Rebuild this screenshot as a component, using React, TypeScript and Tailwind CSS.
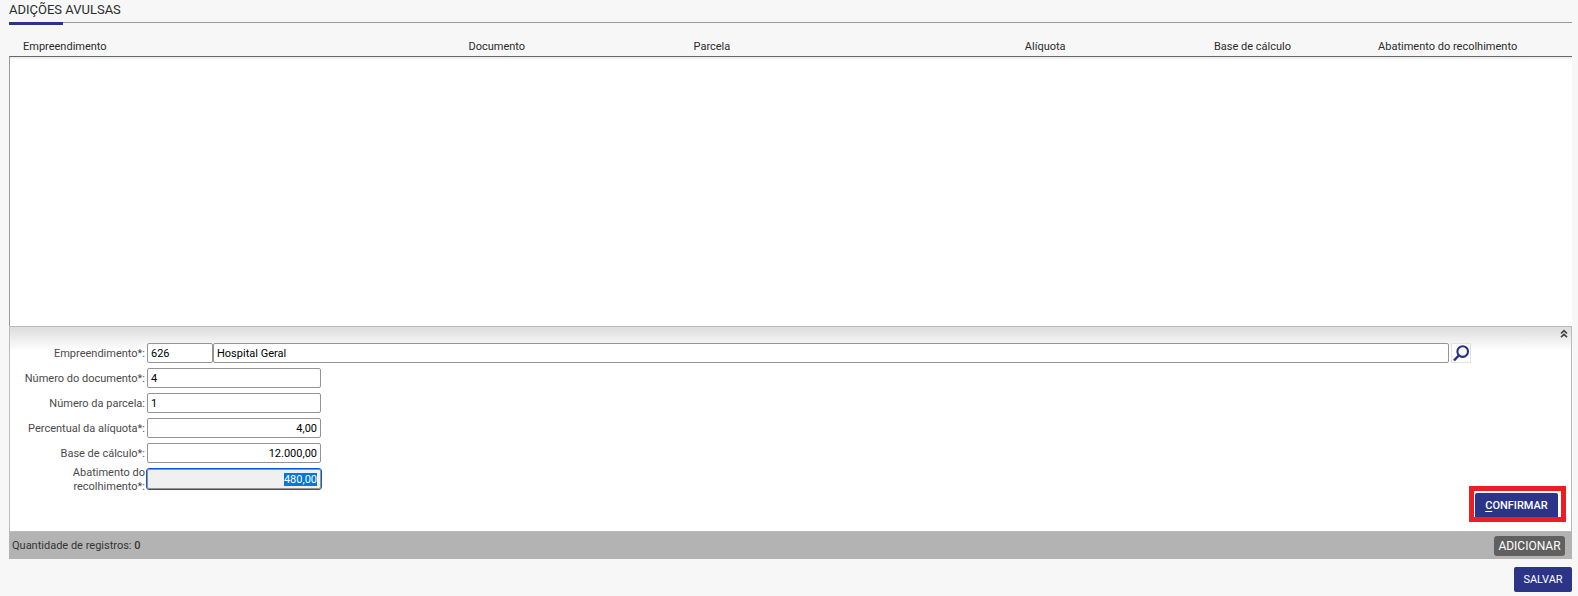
import { useEffect, useRef } from "react";
import type { ReactNode } from "react";

const field =
  "h-5 rounded-[2px] border border-[#949494] bg-white px-[3px] pt-[2px] text-[11px] text-black outline-none";

function Row({ id, label, required = true, children }: { id: string; label: string; required?: boolean; children: ReactNode }) {
  return (
    <div className="flex h-[25px] items-center">
      <label htmlFor={id} className="mr-[2px] w-[135px] shrink-0 pt-[2px] text-right leading-[14px] whitespace-nowrap text-[#4a4a4a]">
        {label}
        {required && "*"}:
      </label>
      {children}
    </div>
  );
}

export default function App() {
  const rebate = useRef<HTMLInputElement>(null);

  useEffect(() => {
    rebate.current?.focus();
    rebate.current?.select();
  }, []);

  return (
    <main className="min-h-screen bg-[#f7f7f7] pr-[6px] pl-[9px] font-[Roboto,sans-serif] text-[11px] text-[#2b2b2b]">
      <header className="h-[25px] pt-[2px]">
        <h1 className="h-5 text-[13px] leading-4 text-[#2b2b2b]">ADIÇÕES AVULSAS</h1>
        <div className="border-t border-[#999999]">
          <div className="-mt-px h-[3px] w-[54px] bg-[#2b3487]" />
        </div>
      </header>

      <table className="w-full table-fixed border-collapse">
        <colgroup>
          <col className="w-[28.5%]" />
          <col className="w-[14.4%]" />
          <col className="w-[21.2%]" />
          <col className="w-[12.1%]" />
          <col className="w-[10.5%]" />
          <col />
        </colgroup>
        <thead>
          <tr className="h-[31px] text-left align-bottom">
            <th className="pb-px pl-[14px] font-normal">Empreendimento</th>
            <th className="pb-px pl-[14px] font-normal">Documento</th>
            <th className="pb-px pl-[14px] font-normal">Parcela</th>
            <th className="pb-px pl-[14px] font-normal">Alíquota</th>
            <th className="pb-px pl-[14px] font-normal">Base de cálculo</th>
            <th className="pb-px pl-[14px] font-normal">Abatimento do recolhimento</th>
          </tr>
        </thead>
      </table>
      <div className="h-[270px] border-t border-l border-t-[#666666] border-l-[#999999] bg-white">
        <div className="h-[2px] bg-[#f1f1f1]" />
      </div>

      <form
        className="border-x border-t border-[#bbbbbb] bg-white bg-[linear-gradient(to_bottom,#dddddd,#ffffff_24px)]"
        onSubmit={(e) => e.preventDefault()}
      >
        <div className="flex h-[13px] justify-end pr-[3px]">
          <button type="button" aria-label="Recolher" className="flex h-[11px] w-2 items-end">
            <svg viewBox="0 0 8 9" className="h-[9px] w-2" fill="none" stroke="#3f3f3f" strokeWidth="1.7">
              <path d="M1 4.5 4 1.7 7 4.5M1 8.2 4 5.4 7 8.2" />
            </svg>
          </button>
        </div>

        <Row id="emp" label="Empreendimento">
          <input id="emp" defaultValue="626" className={`${field} w-[66px] shrink-0`} />
          <input aria-label="Nome do empreendimento" defaultValue="Hospital Geral" className={`${field} min-w-0 flex-1`} />
          <button
            type="button"
            aria-label="Pesquisar"
            className="mr-[100px] ml-[2px] flex h-5 w-5 shrink-0 items-center justify-center border border-[#e2e2e2] bg-[#fcfcfc]"
          >
            <svg viewBox="0 0 18 18" className="h-[18px] w-[18px]" fill="none" stroke="#262f8c">
              <circle cx="10.7" cy="7.6" r="5.3" strokeWidth="2.1" />
              <path d="M6.8 11.5 2 16.5" strokeWidth="2.5" />
            </svg>
          </button>
        </Row>
        <Row id="doc" label="Número do documento">
          <input id="doc" defaultValue="4" className={`${field} w-[174px]`} />
        </Row>
        <Row id="par" label="Número da parcela" required={false}>
          <input id="par" defaultValue="1" className={`${field} w-[174px]`} />
        </Row>
        <Row id="ali" label="Percentual da alíquota">
          <input id="ali" defaultValue="4,00" className={`${field} w-[174px] text-right`} />
        </Row>
        <Row id="base" label="Base de cálculo">
          <input id="base" defaultValue="12.000,00" className={`${field} w-[174px] text-right`} />
        </Row>
        <div className="flex h-7 items-center">
          <label htmlFor="aba" className="mr-[2px] w-[135px] shrink-0 pt-[2px] pl-10 text-right leading-[14px] text-[#4a4a4a]">
            Abatimento do recolhimento*:
          </label>
          <input
            id="aba"
            ref={rebate}
            readOnly
            defaultValue="480,00"
            className="h-5 w-[174px] rounded-[2px] border border-[#949494] bg-[#f0f0f0] px-[3px] text-right text-[11px] text-black outline-1 outline-[#0a5bd3] selection:bg-[#0078d7] selection:text-white"
          />
        </div>
        <div className="flex h-[38px] items-start justify-end pr-[5px]">
          <div className="-mt-[7px] border-[5px] border-[#ee1c25]">
            <div className="bg-white pt-[2px] pr-[3px] pl-px">
              <button type="submit" className="block h-6 w-[83px] rounded-t-[2px] bg-[#2b3487] pt-[2px] text-[11px] font-medium text-white">
                <span className="underline underline-offset-2">C</span>ONFIRMAR
              </button>
            </div>
          </div>
        </div>
      </form>

      <footer>
        <div className="flex h-7 items-center justify-between border-t border-[#bbbbbb] bg-[#b3b3b3] pr-[7px] pl-[3px]">
          <p className="pt-px text-[#333333]">
            Quantidade de registros: <span className="font-medium">0</span>
          </p>
          <button type="button" className="h-5 w-[71px] rounded-[3px] bg-[#606060] text-[12px] text-white">
            ADICIONAR
          </button>
        </div>
        <div className="flex justify-end pt-2">
          <button type="button" className="h-[25px] w-[58px] rounded-[2px] bg-[#2b3487] pt-[2px] text-[11px] text-white">
            SALVAR
          </button>
        </div>
      </footer>
    </main>
  );
}
